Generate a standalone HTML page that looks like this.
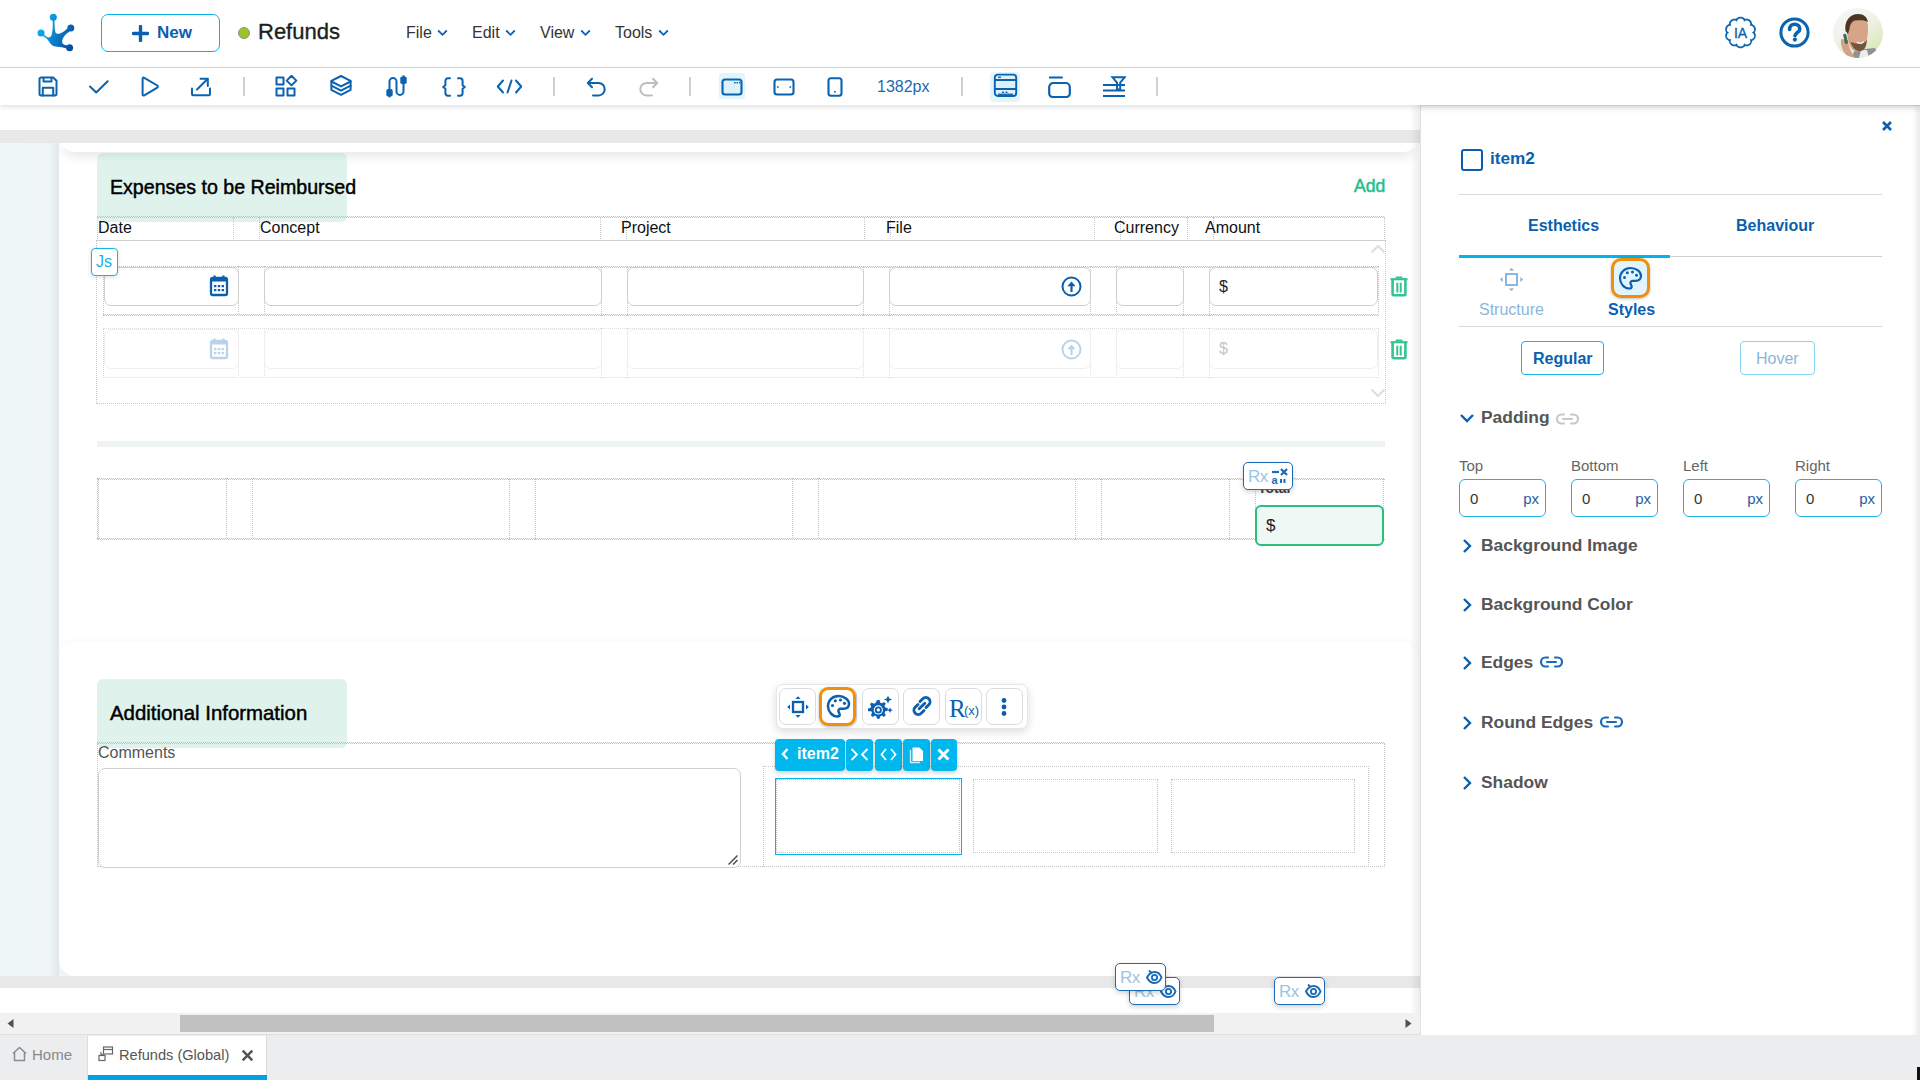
<!DOCTYPE html>
<html><head><meta charset="utf-8">
<style>
*{box-sizing:border-box;margin:0;padding:0}
html,body{width:1920px;height:1080px;overflow:hidden;background:#fff;font-family:"Liberation Sans",sans-serif;color:#222}
.a{position:absolute}
svg{display:block}
.ib{fill:none;stroke:#0a63b0;stroke-width:2;stroke-linecap:round;stroke-linejoin:round}
.dot{border:1px dotted #c4c4c4}
.zh{position:absolute;height:2px;background-image:repeating-linear-gradient(90deg,#c2c2c2 0 1px,transparent 1px 2px),repeating-linear-gradient(90deg,transparent 0 1px,#c2c2c2 1px 2px);background-size:100% 1px,100% 1px;background-position:0 0,0 1px;background-repeat:no-repeat}
.zv{position:absolute;width:2px;background-image:repeating-linear-gradient(0deg,#c2c2c2 0 1px,transparent 1px 2px),repeating-linear-gradient(0deg,transparent 0 1px,#c2c2c2 1px 2px);background-size:1px 100%,1px 100%;background-position:0 0,1px 0;background-repeat:no-repeat}
.inp{position:absolute;border:1.5px solid #cfcfcf;border-radius:7px;background:#fff}
.inp2{position:absolute;border:1px solid #efefef;border-radius:7px;background:#fff}
.lbl{position:absolute;font-size:16px;color:#111;line-height:16px}
.sec{position:absolute;left:1481px;font-size:17.4px;font-weight:bold;color:#555;line-height:17px}
.chev{position:absolute;left:1462px}
.pin{position:absolute;top:479px;width:87px;height:38px;border:1.5px solid #1ab3e8;border-radius:6px}
.pin .z{position:absolute;left:10px;top:10px;font-size:15px;color:#333}
.pin .px{position:absolute;right:6px;top:10px;font-size:15px;color:#1a5fa8}
.plab{position:absolute;top:458px;font-size:15px;color:#666}
.rx{position:absolute;width:51px;height:28px;border:1.5px solid #1a6bb8;border-radius:5px;background:#fff;box-shadow:0 2px 5px rgba(0,0,0,.18)}
.rx span{position:absolute;left:4px;top:4px;font-size:17px;color:#9cc4e4;letter-spacing:-.5px}
.tb{position:absolute;top:688px;width:37px;height:37px;border:1px solid #dcdcdc;border-radius:7px;background:#fff}
.bt{position:absolute;top:739px;height:32px;background:#00b7ee;border-radius:4px;box-shadow:0 2px 4px rgba(0,0,0,.2)}
</style></head>
<body>

<!-- HEADER -->
<div class="a" style="left:0;top:0;width:1920px;height:67px;background:#fff"></div>
<div class="a" style="left:0;top:67px;width:1920px;height:1px;background:#d6d6d6"></div>
<!-- logo -->
<svg class="a" style="left:30px;top:8px" width="52" height="50" viewBox="0 0 52 50">
  <defs><linearGradient id="lg" gradientUnits="userSpaceOnUse" x1="8" y1="20" x2="42" y2="34"><stop offset="0" stop-color="#10b0ee"/><stop offset=".45" stop-color="#0a86d2"/><stop offset="1" stop-color="#0a4ea2"/></linearGradient></defs>
  <g fill="url(#lg)">
    <path d="M22.4 10 C23.2 16 22.8 24 21.4 27.6 C20.6 29.6 18.2 30.2 16.4 28.6 C14.8 27.2 13 26.2 11.5 24.2 L10.5 26.8 C14 28.4 17 30.4 19 33.6 C20.6 36.4 22.4 38.6 27.4 38.8 C31 38.9 35 39.6 38.6 41.6 L40.4 38.2 C37 37.4 33.4 37.2 32.4 35 C31.6 32.8 33 28 38.2 24.6 L41.8 21.6 L39.6 18.4 C36 21.6 33.5 24.2 30.4 25.2 C28.2 26 26.4 26 25.4 24.2 C24.4 20.4 24.4 14 24.6 10 Z"/>
    <circle cx="23.3" cy="9.3" r="3.5"/>
    <circle cx="40.8" cy="20" r="3.5"/>
    <circle cx="11" cy="25" r="3.5"/>
    <circle cx="39.6" cy="39.7" r="3.5"/>
  </g>
</svg>
<!-- New button -->
<div class="a" style="left:101px;top:14px;width:119px;height:38px;border:1.6px solid #0ab2ea;border-radius:7px"></div>
<svg class="a" style="left:132px;top:25px" width="17" height="17" viewBox="0 0 17 17"><path d="M8.5 1.5v14M1.5 8.5h14" stroke="#0a5fb0" stroke-width="3.4" stroke-linecap="round"/></svg>
<div class="a" style="left:157px;top:24px;font-size:17px;line-height:17px;font-weight:bold;color:#0a5fb0">New</div>
<!-- status + title -->
<div class="a" style="left:238px;top:27px;width:12px;height:12px;border-radius:50%;background:#9cc22e;border:1px solid #8a9a70"></div>
<div class="a" style="left:258px;top:21px;font-size:22px;line-height:22px;color:#1e1e1e;-webkit-text-stroke:.35px #1e1e1e">Refunds</div>
<!-- menus -->
<div class="a" style="left:406px;top:25px;font-size:16px;line-height:16px;color:#333">File</div>
<svg class="a" style="left:437px;top:29px" width="11" height="8" viewBox="0 0 11 8"><path d="M1.2 1.5L5.5 5.8L9.8 1.5" fill="none" stroke="#0a63b0" stroke-width="1.8"/></svg>
<div class="a" style="left:472px;top:25px;font-size:16px;line-height:16px;color:#333">Edit</div>
<svg class="a" style="left:505px;top:29px" width="11" height="8" viewBox="0 0 11 8"><path d="M1.2 1.5L5.5 5.8L9.8 1.5" fill="none" stroke="#0a63b0" stroke-width="1.8"/></svg>
<div class="a" style="left:540px;top:25px;font-size:16px;line-height:16px;color:#333">View</div>
<svg class="a" style="left:580px;top:29px" width="11" height="8" viewBox="0 0 11 8"><path d="M1.2 1.5L5.5 5.8L9.8 1.5" fill="none" stroke="#0a63b0" stroke-width="1.8"/></svg>
<div class="a" style="left:615px;top:25px;font-size:16px;line-height:16px;color:#333">Tools</div>
<svg class="a" style="left:658px;top:29px" width="11" height="8" viewBox="0 0 11 8"><path d="M1.2 1.5L5.5 5.8L9.8 1.5" fill="none" stroke="#0a63b0" stroke-width="1.8"/></svg>
<!-- right icons -->
<svg class="a" style="left:1723px;top:15px" width="35" height="35" viewBox="0 0 35 35">
  <path d="M17.50 2.60 L17.81 2.61 L18.12 2.64 L18.43 2.69 L18.74 2.77 L19.04 2.86 L19.33 2.98 L19.62 3.11 L19.91 3.27 L20.18 3.44 L20.45 3.64 L20.70 3.86 L20.94 4.10 L21.17 4.37 L21.37 4.68 L21.52 5.14 L21.90 4.85 L22.25 4.72 L22.59 4.64 L22.93 4.58 L23.26 4.56 L23.59 4.55 L23.92 4.57 L24.24 4.61 L24.55 4.67 L24.86 4.75 L25.16 4.85 L25.45 4.97 L25.73 5.11 L26.00 5.27 L26.26 5.45 L26.50 5.64 L26.74 5.85 L26.96 6.07 L27.16 6.31 L27.35 6.56 L27.52 6.83 L27.68 7.11 L27.81 7.40 L27.93 7.70 L28.03 8.02 L28.11 8.34 L28.16 8.68 L28.18 9.03 L28.17 9.40 L28.02 9.86 L28.50 9.86 L28.86 9.96 L29.18 10.09 L29.49 10.24 L29.77 10.42 L30.04 10.61 L30.29 10.81 L30.53 11.03 L30.74 11.27 L30.95 11.51 L31.13 11.77 L31.29 12.04 L31.44 12.32 L31.56 12.60 L31.67 12.90 L31.76 13.20 L31.82 13.50 L31.87 13.81 L31.89 14.12 L31.90 14.44 L31.88 14.76 L31.84 15.07 L31.78 15.39 L31.70 15.71 L31.59 16.02 L31.46 16.33 L31.31 16.63 L31.12 16.93 L30.89 17.22 L30.50 17.50 L30.89 17.78 L31.12 18.07 L31.31 18.37 L31.46 18.67 L31.59 18.98 L31.70 19.29 L31.78 19.61 L31.84 19.93 L31.88 20.24 L31.90 20.56 L31.89 20.88 L31.87 21.19 L31.82 21.50 L31.76 21.80 L31.67 22.10 L31.56 22.40 L31.44 22.68 L31.29 22.96 L31.13 23.23 L30.95 23.49 L30.74 23.73 L30.53 23.97 L30.29 24.19 L30.04 24.39 L29.77 24.58 L29.49 24.76 L29.18 24.91 L28.86 25.04 L28.50 25.14 L28.02 25.14 L28.17 25.60 L28.18 25.97 L28.16 26.32 L28.11 26.66 L28.03 26.98 L27.93 27.30 L27.81 27.60 L27.68 27.89 L27.52 28.17 L27.35 28.44 L27.16 28.69 L26.96 28.93 L26.74 29.15 L26.50 29.36 L26.26 29.55 L26.00 29.73 L25.73 29.89 L25.45 30.03 L25.16 30.15 L24.86 30.25 L24.55 30.33 L24.24 30.39 L23.92 30.43 L23.59 30.45 L23.26 30.44 L22.93 30.42 L22.59 30.36 L22.25 30.28 L21.90 30.15 L21.52 29.86 L21.37 30.32 L21.17 30.63 L20.94 30.90 L20.70 31.14 L20.45 31.36 L20.18 31.56 L19.91 31.73 L19.62 31.89 L19.33 32.02 L19.04 32.14 L18.74 32.23 L18.43 32.31 L18.12 32.36 L17.81 32.39 L17.50 32.40 L17.19 32.39 L16.88 32.36 L16.57 32.31 L16.26 32.23 L15.96 32.14 L15.67 32.02 L15.38 31.89 L15.09 31.73 L14.82 31.56 L14.55 31.36 L14.30 31.14 L14.06 30.90 L13.83 30.63 L13.63 30.32 L13.48 29.86 L13.10 30.15 L12.75 30.28 L12.41 30.36 L12.07 30.42 L11.74 30.44 L11.41 30.45 L11.08 30.43 L10.76 30.39 L10.45 30.33 L10.14 30.25 L9.84 30.15 L9.55 30.03 L9.27 29.89 L9.00 29.73 L8.74 29.55 L8.50 29.36 L8.26 29.15 L8.04 28.93 L7.84 28.69 L7.65 28.44 L7.48 28.17 L7.32 27.89 L7.19 27.60 L7.07 27.30 L6.97 26.98 L6.89 26.66 L6.84 26.32 L6.82 25.97 L6.83 25.60 L6.98 25.14 L6.50 25.14 L6.14 25.04 L5.82 24.91 L5.51 24.76 L5.23 24.58 L4.96 24.39 L4.71 24.19 L4.47 23.97 L4.26 23.73 L4.05 23.49 L3.87 23.23 L3.71 22.96 L3.56 22.68 L3.44 22.40 L3.33 22.10 L3.24 21.80 L3.18 21.50 L3.13 21.19 L3.11 20.88 L3.10 20.56 L3.12 20.24 L3.16 19.93 L3.22 19.61 L3.30 19.29 L3.41 18.98 L3.54 18.67 L3.69 18.37 L3.88 18.07 L4.11 17.78 L4.50 17.50 L4.11 17.22 L3.88 16.93 L3.69 16.63 L3.54 16.33 L3.41 16.02 L3.30 15.71 L3.22 15.39 L3.16 15.07 L3.12 14.76 L3.10 14.44 L3.11 14.12 L3.13 13.81 L3.18 13.50 L3.24 13.20 L3.33 12.90 L3.44 12.60 L3.56 12.32 L3.71 12.04 L3.87 11.77 L4.05 11.51 L4.26 11.27 L4.47 11.03 L4.71 10.81 L4.96 10.61 L5.23 10.42 L5.51 10.24 L5.82 10.09 L6.14 9.96 L6.50 9.86 L6.98 9.86 L6.83 9.40 L6.82 9.03 L6.84 8.68 L6.89 8.34 L6.97 8.02 L7.07 7.70 L7.19 7.40 L7.32 7.11 L7.48 6.83 L7.65 6.56 L7.84 6.31 L8.04 6.07 L8.26 5.85 L8.50 5.64 L8.74 5.45 L9.00 5.27 L9.27 5.11 L9.55 4.97 L9.84 4.85 L10.14 4.75 L10.45 4.67 L10.76 4.61 L11.08 4.57 L11.41 4.55 L11.74 4.56 L12.07 4.58 L12.41 4.64 L12.75 4.72 L13.10 4.85 L13.48 5.14 L13.63 4.68 L13.83 4.37 L14.06 4.10 L14.30 3.86 L14.55 3.64 L14.82 3.44 L15.09 3.27 L15.38 3.11 L15.67 2.98 L15.96 2.86 L16.26 2.77 L16.57 2.69 L16.88 2.64 L17.19 2.61 L17.50 2.60Z" fill="none" stroke="#0a63b0" stroke-width="1.8"/>
  <text x="17.6" y="22.6" text-anchor="middle" font-family="Liberation Sans" font-size="14" fill="#0a63b0" stroke="#0a63b0" stroke-width=".35">IA</text>
</svg>
<svg class="a" style="left:1779px;top:17px" width="31" height="31" viewBox="0 0 31 31">
  <circle cx="15.5" cy="15.5" r="13.6" fill="none" stroke="#0a63b0" stroke-width="3"/>
  <path d="M10.6 12.4 C10.6 9 12.8 7.2 15.6 7.2 C18.6 7.2 20.8 9.1 20.8 11.9 C20.8 15.2 16.6 15.4 16 18.6" fill="none" stroke="#0a63b0" stroke-width="3.6" stroke-linecap="round"/>
  <circle cx="15.9" cy="22.6" r="2.1" fill="#0a63b0"/>
</svg>
<svg class="a" style="left:1833px;top:8px" width="50" height="50" viewBox="0 0 50 50">
  <defs><clipPath id="av"><circle cx="25" cy="25" r="25"/></clipPath>
  <linearGradient id="avbg" x1="0" y1="0" x2="0.6" y2="1"><stop offset="0" stop-color="#f8f8f6"/><stop offset=".5" stop-color="#f0f2ea"/><stop offset="1" stop-color="#d8e8b8"/></linearGradient>
  <filter id="bl"><feGaussianBlur stdDeviation=".6"/></filter></defs>
  <g clip-path="url(#av)">
    <rect width="50" height="50" fill="url(#avbg)"/>
    <g filter="url(#bl)">
    <path d="M22 42 L18 50 L46 50 L42 40 Z" fill="#8e9096"/>
    <path d="M28 42 L26 50 L36 50 L34 42Z" fill="#ecebea"/>
    <path d="M14 20 C14 11 20 8 26 8 C32 8 35 13 35 20 C35 30 33 38 28 42 C24 45 19 43 17 38 C15 34 14 27 14 20Z" fill="#d6a487"/>
    <path d="M12.5 23 C11 13 17 6 25 6 C31 6 34 9 35 14 C32 12 28 12 22 12.5 C19 13.5 17 16 16.5 21 L15 26 Z" fill="#4e3626"/>
    <path d="M17.5 34 C19.5 40 23 43.5 28 43 C32 42 33.5 38 34 32 C31 35.5 27 36.5 23 35.5 C20.5 35 18.5 34 17.5 34Z" fill="#76543e"/>
    <path d="M24 34 C26 35.5 29 35.5 31 33.5" stroke="#f4f0ea" stroke-width="1.3" fill="none"/>
    <path d="M8 31 C7 38 11 46 16 50 L22 50 C18 44 15 37 15 32 Z" fill="#d3a286"/>
    <rect x="11" y="26" width="3.2" height="10" rx="1" fill="#3f6b5c" transform="rotate(-12 12 31)"/>
    </g>
  </g>
</svg>

<!-- TOOLBAR shadow -->
<div class="a" style="left:0;top:68px;width:1920px;height:37px;background:#fff;box-shadow:0 2px 5px rgba(0,0,0,.12);z-index:2">
<!-- save -->
<svg class="a" style="left:37px;top:8px" width="22" height="22" viewBox="0 0 22 22"><g class="ib"><path d="M2.5 3.2a1.7 1.7 0 0 1 1.7-1.7h12l3.3 3.3v13a1.7 1.7 0 0 1-1.7 1.7H4.2a1.7 1.7 0 0 1-1.7-1.7z"/><path d="M6.5 1.8v3.8h8V1.8"/><path d="M5.8 19.6v-7.8h10.4v7.8"/></g></svg>
<!-- check -->
<svg class="a" style="left:88px;top:11px" width="22" height="16" viewBox="0 0 22 16"><path d="M2 7.5l6.2 6 11.5-11.2" class="ib" stroke-width="2.1" stroke-linecap="butt"/></svg>
<!-- play -->
<svg class="a" style="left:140px;top:8px" width="20" height="22" viewBox="0 0 20 22"><path d="M2.6 2.8c0-1 .9-1.5 1.7-1l13 7.7c.8.5.8 1.6 0 2.1l-13 7.8c-.8.5-1.7 0-1.7-1z" class="ib" stroke-width="2.1"/></svg>
<!-- export -->
<svg class="a" style="left:190px;top:9px" width="22" height="20" viewBox="0 0 22 20"><g class="ib" stroke-width="2.1"><path d="M2 11.5v5.8c0 .6.4 1 1 1h16c.6 0 1-.4 1-1v-5.8"/><path d="M7 12.5L17.5 2"/><path d="M10.5 1.8h7.3v7.3"/></g></svg>
<div class="a" style="left:243px;top:9px;width:2px;height:19px;background:#d0d0d0"></div>
<!-- widgets -->
<svg class="a" style="left:275px;top:7px" width="23" height="23" viewBox="0 0 23 23"><g class="ib" stroke-width="2.2" stroke-linejoin="miter" stroke-linecap="butt"><rect x="1.5" y="2.5" width="7" height="7"/><rect x="1.5" y="13.5" width="7" height="7"/><rect x="12.5" y="13.5" width="7" height="7"/><path d="M16.5 0.8l4.8 4.8-4.8 4.8-4.8-4.8z"/></g></svg>
<!-- layers -->
<svg class="a" style="left:329px;top:6px" width="24" height="24" viewBox="0 0 24 24"><g class="ib" stroke-width="2.2"><path d="M12 2l9.6 4.9v0.6L12 12.4 2.4 7.5v-0.6z"/><path d="M2.4 7.5v4.2L12 16.6l9.6-4.9V7.5"/><path d="M2.4 11.7v4.2L12 20.8l9.6-4.9v-4.2"/></g></svg>
<!-- connector -->
<svg class="a" style="left:385px;top:7px" width="23" height="23" viewBox="0 0 23 23"><g fill="#0a63b0"><rect x="1.3" y="14" width="6.4" height="7.6" rx="1.8"/><rect x="15.3" y="1.4" width="6.4" height="7.6" rx="1.8"/><rect x="3.5" y="20" width="2" height="2.4"/><rect x="17.5" y="0.3" width="2" height="2.4"/></g><path d="M4.5 15V6.6a3.5 3.5 0 0 1 7 0v9.8a3.5 3.5 0 0 0 7 0V8" class="ib" stroke-width="2.1"/></svg>
<!-- braces -->
<svg class="a" style="left:441px;top:8px" width="26" height="22" viewBox="0 0 26 22"><g class="ib" stroke-width="2.6" stroke-linecap="butt"><path d="M9 2.3H7A2.6 2.6 0 0 0 4.4 4.9v4.3L2.2 11l2.2 1.8v4.3A2.6 2.6 0 0 0 7 19.7h2"/><path d="M17 2.3h2a2.6 2.6 0 0 1 2.6 2.6v4.3l2.2 1.8-2.2 1.8v4.3a2.6 2.6 0 0 1-2.6 2.6h-2"/></g></svg>
<!-- code -->
<svg class="a" style="left:496px;top:11px" width="27" height="15" viewBox="0 0 27 15"><g class="ib" stroke-width="2.2"><path d="M7 1.5L1.8 7.5 7 13.5"/><path d="M20 1.5l5.2 6-5.2 6"/><path d="M15.5 1.5l-4 12"/></g></svg>
<div class="a" style="left:553px;top:9px;width:2px;height:19px;background:#d0d0d0"></div>
<!-- undo -->
<svg class="a" style="left:586px;top:9px" width="22" height="20" viewBox="0 0 22 20"><g class="ib" stroke-width="2.1"><path d="M6 1.8L1.8 6 6 10.2"/><path d="M2.2 6h10.3a6.2 6.2 0 0 1 0 12.4H7"/></g></svg>
<!-- redo -->
<svg class="a" style="left:637px;top:9px" width="22" height="20" viewBox="0 0 22 20"><g class="ib" style="stroke:#bdbdbd" stroke-width="2.1"><path d="M16 1.8L20.2 6 16 10.2"/><path d="M19.8 6H9.5a6.2 6.2 0 0 0 0 12.4H15"/></g></svg>
<div class="a" style="left:689px;top:9px;width:2px;height:19px;background:#d0d0d0"></div>
<!-- desktop active -->
<div class="a" style="left:719px;top:5px;width:26px;height:26px;background:#e2f4fc;border-radius:3px"></div>
<svg class="a" style="left:721px;top:10px" width="22" height="18" viewBox="0 0 22 18"><rect x="1.5" y="1.5" width="19" height="15" rx="2.5" fill="#ddf1fa" stroke="#0a63b0" stroke-width="2.1"/><g fill="#0a63b0"><rect x="13" y="4" width="1.6" height="1.4"/><rect x="15.5" y="4" width="1.6" height="1.4"/><rect x="18" y="4" width="1.3" height="1.4"/></g></svg>
<!-- tablet -->
<svg class="a" style="left:773px;top:10px" width="22" height="18" viewBox="0 0 22 18"><rect x="1.5" y="1.5" width="19" height="15" rx="2.5" fill="none" stroke="#0a63b0" stroke-width="2.1"/><g fill="#0a63b0"><rect x="4" y="8.2" width="1.6" height="1.6"/><rect x="16.5" y="8.2" width="1.6" height="1.6"/></g></svg>
<!-- mobile -->
<svg class="a" style="left:827px;top:9px" width="16" height="20" viewBox="0 0 16 20"><rect x="1.5" y="1.3" width="13" height="17.5" rx="2.5" fill="none" stroke="#0a63b0" stroke-width="2.1"/><rect x="7.2" y="14" width="1.6" height="1.6" fill="#0a63b0"/></svg>
<div class="a" style="left:877px;top:11px;font-size:16px;line-height:16px;color:#1a6ab2">1382px</div>
<div class="a" style="left:961px;top:9px;width:2px;height:19px;background:#d0d0d0"></div>
<!-- layout active -->
<div class="a" style="left:990px;top:4px;width:30px;height:30px;background:#e2f4fc;border-radius:4px"></div>
<svg class="a" style="left:993px;top:5px" width="25" height="25" viewBox="0 0 25 25"><rect x="1.8" y="1.6" width="21.4" height="21.4" rx="3" fill="#ddf1fa" stroke="#0a63b0" stroke-width="1.9"/><path d="M2 7h21M2 16h21" stroke="#0a63b0" stroke-width="1.9"/><rect x="5" y="3.6" width="3" height="1.3" fill="#0a63b0"/><rect x="9" y="18.6" width="2" height="1.4" fill="#0a63b0"/><rect x="12.5" y="18.6" width="2" height="1.4" fill="#0a63b0"/><rect x="5" y="20.6" width="15" height="1.3" fill="#0a63b0"/></svg>
<!-- card -->
<svg class="a" style="left:1047px;top:7px" width="25" height="23" viewBox="0 0 25 23"><path d="M2.2 12a4 4 0 0 1 4-4h12.6a4 4 0 0 1 4 4v6.5a3.5 3.5 0 0 1-3.5 3.5H5.7a3.5 3.5 0 0 1-3.5-3.5z" fill="none" stroke="#0a63b0" stroke-width="2.2"/><rect x="2" y="1.5" width="13.8" height="2" fill="#0a63b0"/></svg>
<!-- filter lines -->
<svg class="a" style="left:1102px;top:8px" width="24" height="21" viewBox="0 0 24 21"><g fill="#0a63b0"><rect x="1" y="8" width="22" height="2"/><rect x="1" y="13.5" width="22" height="2"/><rect x="1" y="19" width="22" height="2"/></g><path d="M10.5 1.3h12.2l-4.5 5.3v6.8h-3.2V6.6z" fill="none" stroke="#0a63b0" stroke-width="2"/></svg>
<div class="a" style="left:1156px;top:9px;width:2px;height:19px;background:#d0d0d0"></div>
</div>

<!-- CANVAS -->
<div class="a" style="left:0;top:105px;width:1420px;height:930px;background:#fff"></div>
<div class="a" style="left:55px;top:950px;width:25px;height:26px;background:#eef5f4"></div>
<div class="a" style="left:59px;top:132px;width:1360px;height:20px;background:#fff;border-radius:0 0 16px 16px;box-shadow:0 8px 12px -4px rgba(0,0,0,.11)"></div>
<div class="a" style="left:59px;top:642px;width:1360px;height:334px;background:#fff;border-radius:16px 16px 16px 16px;box-shadow:0 -2px 6px rgba(0,0,0,.025)"></div>
<div class="a" style="left:0;top:130px;width:1420px;height:13px;background:#e8e8e8"></div>
<div class="a" style="left:0;top:143px;width:59px;height:833px;background:linear-gradient(90deg,#eff6f6 0,#eef5f4 50px,#e8eded 55px,#e1e6e6 59px)"></div>
<div class="a" style="left:0;top:976px;width:1420px;height:12px;background:#e8e8e8"></div>
<div class="a" style="left:1410px;top:105px;width:10px;height:930px;background:linear-gradient(90deg,rgba(0,0,0,0),rgba(0,0,0,.075))"></div>
<!-- scrollbar -->
<div class="a" style="left:0;top:1013px;width:1420px;height:22px;background:#f1f1f1"></div>
<div class="a" style="left:180px;top:1015px;width:1034px;height:17px;background:#c1c1c1"></div>
<svg class="a" style="left:6px;top:1018px" width="9" height="11" viewBox="0 0 9 11"><path d="M1.5 5.5L7.5 1v9z" fill="#505050"/></svg>
<svg class="a" style="left:1404px;top:1018px" width="9" height="11" viewBox="0 0 9 11"><path d="M7.5 5.5L1.5 1v9z" fill="#505050"/></svg>

<!-- EXPENSES SECTION -->
<div class="a" style="left:97px;top:153px;width:250px;height:69px;background:linear-gradient(180deg,#cfe6dd 0,#dff3ec 8px,#dff3ec 100%);border-radius:6px"></div>
<div class="a" style="left:110px;top:177px;font-size:19.6px;line-height:20px;color:#000;-webkit-text-stroke:.45px #000">Expenses to be Reimbursed</div>
<div class="a" style="left:1354px;top:178px;font-size:17.6px;line-height:17px;color:#22bf8a;-webkit-text-stroke:.5px #22bf8a">Add</div>

<!-- header row -->
<div class="a dot" style="left:97px;top:217px;width:1288px;height:24px;border-top:none"></div><div class="zh" style="left:97px;top:216px;width:1288px"></div>
<div class="a dot" style="left:233px;top:217px;width:27px;height:24px;border-top:none;border-bottom:none"></div>
<div class="a dot" style="left:600px;top:217px;width:27px;height:24px;border-top:none;border-bottom:none"></div>
<div class="a dot" style="left:864px;top:217px;width:27px;height:24px;border-top:none;border-bottom:none"></div>
<div class="a dot" style="left:1094px;top:217px;width:27px;height:24px;border-top:none;border-bottom:none"></div>
<div class="a dot" style="left:1187px;top:217px;width:27px;height:24px;border-top:none;border-bottom:none"></div>
<div class="lbl" style="left:98px;top:220px">Date</div>
<div class="lbl" style="left:260px;top:220px">Concept</div>
<div class="lbl" style="left:621px;top:220px">Project</div>
<div class="lbl" style="left:886px;top:220px">File</div>
<div class="lbl" style="left:1114px;top:220px">Currency</div>
<div class="lbl" style="left:1205px;top:220px">Amount</div>

<!-- body container -->
<div class="a dot" style="left:96px;top:240px;width:1290px;height:164px;border-top:1.5px solid #cfcfcf"></div>
<svg class="a" style="left:1370px;top:244px" width="16" height="10" viewBox="0 0 16 10"><path d="M1.5 8.5L8 2l6.5 6.5" fill="none" stroke="#dedede" stroke-width="2"/></svg>
<svg class="a" style="left:1370px;top:388px" width="16" height="10" viewBox="0 0 16 10"><path d="M1.5 1.5L8 8l6.5-6.5" fill="none" stroke="#dedede" stroke-width="2"/></svg>

<!-- row 1 -->
<div class="a dot" style="left:103px;top:266px;width:1276px;height:50px;border-top:none;border-bottom:none"></div><div class="zh" style="left:103px;top:266px;width:1276px"></div><div class="zh" style="left:103px;top:314px;width:1276px"></div>
<div class="a dot" style="left:238px;top:266px;width:27px;height:50px;border-top:none;border-bottom:none"></div>
<div class="a dot" style="left:601px;top:266px;width:27px;height:50px;border-top:none;border-bottom:none"></div>
<div class="a dot" style="left:863px;top:266px;width:27px;height:50px;border-top:none;border-bottom:none"></div>
<div class="a dot" style="left:1090px;top:266px;width:27px;height:50px;border-top:none;border-bottom:none"></div>
<div class="a dot" style="left:1183px;top:266px;width:27px;height:50px;border-top:none;border-bottom:none"></div>
<div class="inp" style="left:104px;top:267px;width:135px;height:39px"></div>
<div class="inp" style="left:264px;top:267px;width:338px;height:39px"></div>
<div class="inp" style="left:627px;top:267px;width:237px;height:39px"></div>
<div class="inp" style="left:889px;top:267px;width:202px;height:39px"></div>
<div class="inp" style="left:1116px;top:267px;width:68px;height:39px"></div>
<div class="inp" style="left:1209px;top:267px;width:169px;height:39px"></div>
<svg class="a" style="left:209px;top:275px" width="20" height="22" viewBox="0 0 20 22"><g fill="#0a5fb0"><rect x="4.5" y="0.5" width="2.2" height="4"/><rect x="13.3" y="0.5" width="2.2" height="4"/></g><rect x="2" y="3" width="16" height="17" rx="1.8" fill="none" stroke="#0a5fb0" stroke-width="2.3"/><rect x="2" y="3" width="16" height="3.5" fill="#0a5fb0"/><g fill="#0a5fb0"><rect x="5" y="10" width="2.4" height="2.2"/><rect x="8.8" y="10" width="2.4" height="2.2"/><rect x="12.6" y="10" width="2.4" height="2.2"/><rect x="5" y="14" width="2.4" height="2.2"/><rect x="8.8" y="14" width="2.4" height="2.2"/><rect x="12.6" y="14" width="2.4" height="2.2"/></g></svg>
<svg class="a" style="left:1061px;top:276px" width="21" height="21" viewBox="0 0 21 21"><circle cx="10.5" cy="10.5" r="9" fill="none" stroke="#0a5fb0" stroke-width="2"/><path d="M10.5 16V7.5" stroke="#0a5fb0" stroke-width="2.2"/><path d="M6.3 10.2L10.5 5.6l4.2 4.6z" fill="#0a5fb0"/></svg>
<div class="a" style="left:1219px;top:279px;font-size:16px;line-height:16px;color:#222">$</div>
<svg class="a" style="left:1389px;top:276px" width="20" height="21" viewBox="0 0 20 21"><g fill="none" stroke="#34c490"><path d="M1.5 3.2h17" stroke-width="2.2"/><path d="M3.6 4v14.2c0 .6.4 1 1 1h10.8c.6 0 1-.4 1-1V4" stroke-width="2.6"/><path d="M8.3 6.8v9.6M11.7 6.8v9.6" stroke-width="2"/><path d="M7.5 2.6V1.3h5v1.3" stroke-width="1.6"/></g></svg>

<!-- row 2 (faded) -->
<div class="a dot" style="left:103px;top:328px;width:1276px;height:50px;border-color:#dcdcdc"></div>
<div class="a dot" style="left:238px;top:328px;width:27px;height:50px;border-color:#e2e2e2;border-top:none;border-bottom:none"></div>
<div class="a dot" style="left:601px;top:328px;width:27px;height:50px;border-color:#e2e2e2;border-top:none;border-bottom:none"></div>
<div class="a dot" style="left:863px;top:328px;width:27px;height:50px;border-color:#e2e2e2;border-top:none;border-bottom:none"></div>
<div class="a dot" style="left:1090px;top:328px;width:27px;height:50px;border-color:#e2e2e2;border-top:none;border-bottom:none"></div>
<div class="a dot" style="left:1183px;top:328px;width:27px;height:50px;border-color:#e2e2e2;border-top:none;border-bottom:none"></div>
<div class="inp2" style="left:104px;top:329px;width:135px;height:40px"></div>
<div class="inp2" style="left:264px;top:329px;width:338px;height:40px"></div>
<div class="inp2" style="left:627px;top:329px;width:237px;height:40px"></div>
<div class="inp2" style="left:889px;top:329px;width:202px;height:40px"></div>
<div class="inp2" style="left:1116px;top:329px;width:68px;height:40px"></div>
<div class="inp2" style="left:1209px;top:329px;width:169px;height:40px"></div>
<svg class="a" style="left:209px;top:338px" width="20" height="22" viewBox="0 0 20 22"><g fill="#b9d4ea"><rect x="4.5" y="0.5" width="2.2" height="4"/><rect x="13.3" y="0.5" width="2.2" height="4"/></g><rect x="2" y="3" width="16" height="17" rx="1.8" fill="none" stroke="#b9d4ea" stroke-width="2.3"/><rect x="2" y="3" width="16" height="3.5" fill="#b9d4ea"/><g fill="#b9d4ea"><rect x="5" y="10" width="2.4" height="2.2"/><rect x="8.8" y="10" width="2.4" height="2.2"/><rect x="12.6" y="10" width="2.4" height="2.2"/><rect x="5" y="14" width="2.4" height="2.2"/><rect x="8.8" y="14" width="2.4" height="2.2"/><rect x="12.6" y="14" width="2.4" height="2.2"/></g></svg>
<svg class="a" style="left:1061px;top:339px" width="21" height="21" viewBox="0 0 21 21"><circle cx="10.5" cy="10.5" r="9" fill="none" stroke="#b9d4ea" stroke-width="2"/><path d="M10.5 16V7.5" stroke="#b9d4ea" stroke-width="2.2"/><path d="M6.3 10.2L10.5 5.6l4.2 4.6z" fill="#b9d4ea"/></svg>
<div class="a" style="left:1219px;top:341px;font-size:16px;line-height:16px;color:#c4c4c4">$</div>
<svg class="a" style="left:1389px;top:339px" width="20" height="21" viewBox="0 0 20 21"><g fill="none" stroke="#34c490"><path d="M1.5 3.2h17" stroke-width="2.2"/><path d="M3.6 4v14.2c0 .6.4 1 1 1h10.8c.6 0 1-.4 1-1V4" stroke-width="2.6"/><path d="M8.3 6.8v9.6M11.7 6.8v9.6" stroke-width="2"/><path d="M7.5 2.6V1.3h5v1.3" stroke-width="1.6"/></g></svg>

<!-- Js badge -->
<div class="a" style="left:91px;top:248px;width:27px;height:28px;border:1.8px solid #1ab3e8;border-radius:4px;background:#fff;box-shadow:0 1px 4px rgba(0,0,0,.15)"><span class="a" style="left:4px;top:5px;font-size:16px;line-height:16px;color:#1ab3e8">Js</span></div>

<!-- separator -->
<div class="a" style="left:97px;top:441px;width:1288px;height:6px;background:#f0f3f3"></div>

<!-- total row -->
<div class="zh" style="left:97px;top:478px;width:1288px"></div><div class="zh" style="left:97px;top:538px;width:1288px"></div><div class="zv" style="left:97px;top:478px;height:62px"></div><div class="a" style="left:1383px;top:478px;width:1px;height:62px;border-left:1px dotted #c4c4c4"></div>
<div class="a dot" style="left:226px;top:478px;width:27px;height:62px;border-top:none;border-bottom:none"></div>
<div class="a dot" style="left:509px;top:478px;width:27px;height:62px;border-top:none;border-bottom:none"></div>
<div class="a dot" style="left:792px;top:478px;width:27px;height:62px;border-top:none;border-bottom:none"></div>
<div class="a dot" style="left:1075px;top:478px;width:27px;height:62px;border-top:none;border-bottom:none"></div>
<div class="a dot" style="left:1229px;top:478px;width:27px;height:62px;border-top:none;border-bottom:none"></div>
<div class="a" style="left:1258px;top:481px;font-size:14px;line-height:14px;font-weight:bold;color:#444">Total</div>
<div class="a" style="left:1255px;top:505px;width:129px;height:41px;border:2.2px solid #2ebd7e;border-radius:6px;background:#eef8f4"></div>
<div class="a" style="left:1266px;top:517px;font-size:17px;line-height:17px;color:#222">$</div>
<div class="rx" style="left:1243px;top:462px;width:50px;height:28px"><span>Rx</span>
<svg class="a" style="left:25px;top:4px" width="20" height="18" viewBox="0 0 20 18"><path d="M3 5h7" stroke="#1a6bb8" stroke-width="2.2"/><path d="M12 2l6 6M18 2l-6 6" stroke="#1a6bb8" stroke-width="2.2"/><text x="2.5" y="16.5" font-family="Liberation Sans" font-weight="bold" font-size="11" fill="#1a6bb8">a</text><rect x="11" y="12" width="2" height="4" fill="#1a6bb8"/><rect x="14.5" y="12" width="2" height="4" fill="#1a6bb8"/></svg></div>

<!-- ADDITIONAL INFO SECTION -->
<div class="a" style="left:97px;top:679px;width:250px;height:69px;background:#dff3ec;border-radius:6px"></div>
<div class="a" style="left:110px;top:703px;font-size:20.4px;line-height:20px;color:#000;-webkit-text-stroke:.45px #000">Additional Information</div>
<div class="a dot" style="left:97px;top:743px;width:1288px;height:124px;border-top:none"></div><div class="zh" style="left:97px;top:742px;width:1288px"></div>
<div class="a" style="left:98px;top:745px;font-size:16px;line-height:16px;color:#555">Comments</div>
<div class="a" style="left:98px;top:768px;width:643px;height:100px;border:1.5px solid #cfcfcf;border-radius:7px;background:#fff"></div>
<svg class="a" style="left:727px;top:854px" width="12" height="12" viewBox="0 0 12 12"><path d="M1.5 10.5l9-9M6 10.5l4.5-4.5" stroke="#444" stroke-width="1.4"/></svg>
<div class="a dot" style="left:763px;top:766px;width:606px;height:101px"></div>
<div class="a" style="left:775px;top:778px;width:187px;height:77px;border:1.6px solid #00b3ec"><div class="a dot" style="left:0;top:0;width:183.8px;height:73.8px"></div></div>
<div class="a dot" style="left:973px;top:779px;width:185px;height:74px"></div>
<div class="a dot" style="left:1171px;top:779px;width:184px;height:74px"></div>

<!-- floating toolbar -->
<div class="a" style="left:776px;top:684px;width:252px;height:45px;border:1px solid #e6e6e6;border-radius:7px;background:#fff;box-shadow:0 3px 8px rgba(0,0,0,.14)"></div>
<div class="tb" style="left:779px"></div>
<div class="tb" style="left:820px"></div>
<div class="tb" style="left:862px"></div>
<div class="tb" style="left:903px"></div>
<div class="tb" style="left:945px"></div>
<div class="tb" style="left:986px"></div>
<div class="a" style="left:819px;top:687px;width:37px;height:39px;border:3.5px solid #f0900a;border-radius:9px;box-shadow:0 1px 3px rgba(0,0,0,.3)"></div>
<!-- move icon -->
<svg class="a" style="left:786px;top:695px" width="24" height="24" viewBox="0 0 24 24"><rect x="7" y="7" width="10" height="10" fill="none" stroke="#0a5fb0" stroke-width="2.3"/><g fill="#0a5fb0"><path d="M12 1.2l2.6 2.8H9.4z"/><path d="M12 22.8l2.6-2.8H9.4z"/><path d="M1.2 12l2.8-2.6v5.2z"/><path d="M22.8 12l-2.8-2.6v5.2z"/></g></svg>
<!-- palette icon -->
<svg class="a" style="left:826px;top:694px" width="25" height="25" viewBox="0 0 25 25"><path d="M12.5 2C6.6 2 2 6.5 2 12.3c0 5.3 4.3 10.2 9.4 10.2 1.5 0 2.3-.8 2.3-2 0-1.5-1.3-1.8-1.3-3.4 0-1.3 1-2.3 2.3-2.3h2.8c3.7 0 5.5-2.3 5.5-5C23 5.8 18.5 2 12.5 2z" fill="none" stroke="#0a5fb0" stroke-width="2.5"/><g fill="#0a5fb0"><circle cx="6.5" cy="11.5" r="1.6"/><circle cx="9.3" cy="6.8" r="1.6"/><circle cx="14.5" cy="6" r="1.6"/><circle cx="18.5" cy="9.3" r="1.6"/></g></svg>
<!-- gear sparkle -->
<svg class="a" style="left:867px;top:695px" width="27" height="25" viewBox="0 0 27 25"><g transform="translate(1 4.5)"><path d="M9 0.5h2.6l.5 2.4 1.8.8 2.1-1.3 1.8 1.8-1.3 2.1.8 1.8 2.4.5v2.6l-2.4.5-.8 1.8 1.3 2.1-1.8 1.8-2.1-1.3-1.8.8-.5 2.4H9l-.5-2.4-1.8-.8-2.1 1.3-1.8-1.8 1.3-2.1-.8-1.8L0 11.7V9.1l2.4-.5.8-1.8-1.3-2.1 1.8-1.8 2.1 1.3 1.8-.8z" fill="#0a5fb0"/><circle cx="10.3" cy="10.4" r="4.6" fill="#fff"/><circle cx="10.3" cy="10.4" r="2.6" fill="none" stroke="#0a5fb0" stroke-width="1.8"/></g><path d="M21 0.5l1.2 2.8 2.8 1.2-2.8 1.2-1.2 2.8-1.2-2.8-2.8-1.2 2.8-1.2z" fill="#0a5fb0"/><path d="M23 12.5l.9 1.8 1.8.9-1.8.9-.9 1.8-.9-1.8-1.8-.9 1.8-.9z" fill="#0a5fb0"/></svg>
<!-- link -->
<svg class="a" style="left:910px;top:694px" width="24" height="24" viewBox="0 0 24 24"><g fill="none" stroke="#0a5fb0" stroke-width="2.9" stroke-linecap="round"><path d="M10 7.5l2.8-2.8a4.2 4.2 0 0 1 6 6L16 13.5"/><path d="M14 16.5l-2.8 2.8a4.2 4.2 0 0 1-6-6L8 10.5"/><path d="M9.2 14.8l5.6-5.6"/></g></svg>
<!-- R(x) -->
<div class="a" style="left:949px;top:696px;font-family:'Liberation Serif',serif;font-size:25px;line-height:25px;color:#0a5fb0;letter-spacing:-1px">R</div>
<div class="a" style="left:964px;top:704px;font-size:13px;line-height:13px;color:#0a5fb0">(x)</div>
<!-- kebab -->
<svg class="a" style="left:1000px;top:697px" width="8" height="21" viewBox="0 0 8 21"><g fill="#0a5fb0"><circle cx="4" cy="3.5" r="2.4"/><circle cx="4" cy="10" r="2.4"/><circle cx="4" cy="16.5" r="2.4"/></g></svg>

<!-- blue item toolbar -->
<div class="bt" style="left:775px;width:70px"></div>
<div class="bt" style="left:846px;width:27px"></div>
<div class="bt" style="left:875px;width:27px"></div>
<div class="bt" style="left:903px;width:27px"></div>
<div class="bt" style="left:931px;width:26px"></div>
<svg class="a" style="left:781px;top:747px" width="9" height="14" viewBox="0 0 9 14"><path d="M6.5 2L2 7l4.5 5" fill="none" stroke="#fff" stroke-width="2.4"/></svg>
<div class="a" style="left:797px;top:746px;font-size:16px;line-height:16px;font-weight:bold;color:#fff">item2</div>
<svg class="a" style="left:850px;top:747px" width="19" height="15" viewBox="0 0 19 15"><path d="M1.5 2l5.5 5.5L1.5 13M17.5 2L12 7.5l5.5 5.5" fill="none" stroke="#fff" stroke-width="1.8"/></svg>
<svg class="a" style="left:880px;top:747px" width="17" height="15" viewBox="0 0 17 15"><path d="M6 2L1.5 7.5 6 13M11 2l4.5 5.5L11 13" fill="none" stroke="#fff" stroke-width="1.8"/></svg>
<svg class="a" style="left:908px;top:745px" width="17" height="20" viewBox="0 0 17 20"><path d="M4.5 2.5h7l3.5 3.5v10h-10.5z" fill="#fff"/><path d="M2.5 5v12.5h9.5" fill="none" stroke="#d0f0fc" stroke-width="1.3"/></svg>
<svg class="a" style="left:936px;top:747px" width="15" height="15" viewBox="0 0 15 15"><path d="M2.5 2.5l10 10M12.5 2.5l-10 10" stroke="#fff" stroke-width="3"/></svg>

<!-- bottom Rx badges -->
<div class="rx" style="left:1129px;top:977px;z-index:1"><span>Rx</span><svg class="a" style="left:29px;top:5px" width="18" height="16" viewBox="0 0 18 16"><path d="M2 8.5C4 4.5 7 3 9.5 3s5.5 1.5 7 5.5C15 12.5 12 14 9.5 14S4 12.5 2 8.5z" fill="none" stroke="#1a6bb8" stroke-width="2"/><circle cx="9.5" cy="8.5" r="2.6" fill="none" stroke="#1a6bb8" stroke-width="1.8"/><path d="M4 1.5l3 3" stroke="#1a6bb8" stroke-width="1.8"/></svg></div>
<div class="rx" style="left:1115px;top:963px;z-index:1"><span>Rx</span><svg class="a" style="left:29px;top:5px" width="18" height="16" viewBox="0 0 18 16"><path d="M2 8.5C4 4.5 7 3 9.5 3s5.5 1.5 7 5.5C15 12.5 12 14 9.5 14S4 12.5 2 8.5z" fill="none" stroke="#1a6bb8" stroke-width="2"/><circle cx="9.5" cy="8.5" r="2.6" fill="none" stroke="#1a6bb8" stroke-width="1.8"/><path d="M4 1.5l3 3" stroke="#1a6bb8" stroke-width="1.8"/></svg></div>
<div class="rx" style="left:1274px;top:977px;z-index:1"><span>Rx</span><svg class="a" style="left:29px;top:5px" width="18" height="16" viewBox="0 0 18 16"><path d="M2 8.5C4 4.5 7 3 9.5 3s5.5 1.5 7 5.5C15 12.5 12 14 9.5 14S4 12.5 2 8.5z" fill="none" stroke="#1a6bb8" stroke-width="2"/><circle cx="9.5" cy="8.5" r="2.6" fill="none" stroke="#1a6bb8" stroke-width="1.8"/><path d="M4 1.5l3 3" stroke="#1a6bb8" stroke-width="1.8"/></svg></div>

<!-- TAB BAR -->
<div class="a" style="left:0;top:1034px;width:1920px;height:46px;background:#ecedef;border-top:1.5px solid #dedede"></div>
<svg class="a" style="left:11px;top:1046px" width="17" height="16" viewBox="0 0 17 16"><path d="M2 7.5L8.5 1.5 15 7.5M3.5 6.3v8.2h10V6.3" fill="none" stroke="#8a8a8a" stroke-width="1.5" stroke-linejoin="round"/></svg>
<div class="a" style="left:32px;top:1047px;font-size:15px;line-height:15px;color:#888">Home</div>
<div class="a" style="left:87px;top:1036px;width:180px;height:44px;background:#fff;border-left:1px solid #dcdcdc;border-right:1px solid #dcdcdc"></div>
<div class="a" style="left:88px;top:1075px;width:179px;height:5px;background:#00a3e0"></div>
<svg class="a" style="left:98px;top:1046px" width="16" height="16" viewBox="0 0 16 16"><g fill="none" stroke="#666" stroke-width="1.2"><rect x="5.5" y="1" width="9" height="7"/><path d="M5.5 3.5h9"/><rect x="1" y="9.5" width="6" height="5"/><path d="M3 6v3.5M5.5 8.5H3"/></g></svg>
<div class="a" style="left:119px;top:1048px;font-size:14.6px;line-height:15px;color:#555">Refunds (Global)</div>
<svg class="a" style="left:241px;top:1049px" width="13" height="13" viewBox="0 0 13 13"><path d="M0.8 2.6L2.6 0.8 6.5 4.7 10.4 0.8 12.2 2.6 8.3 6.5 12.2 10.4 10.4 12.2 6.5 8.3 2.6 12.2 0.8 10.4 4.7 6.5z" fill="#555"/></svg>

<!-- RIGHT PANEL -->
<div class="a" style="left:1420px;top:105px;width:500px;height:930px;background:#fff;border-left:1px solid #e2e2e2;border-top:1px solid #dcdcdc"></div>
<div class="a" style="left:1420px;top:106px;width:500px;height:8px;background:linear-gradient(180deg,rgba(0,0,0,.05),rgba(0,0,0,0))"></div>
<div class="a" style="left:1912px;top:105px;width:8px;height:930px;background:linear-gradient(90deg,rgba(0,0,0,0),rgba(0,0,0,.08))"></div>
<svg class="a" style="left:1881px;top:120px" width="12" height="12" viewBox="0 0 12 12"><path d="M2 2l8 8M10 2l-8 8" stroke="#0a5fb0" stroke-width="2.6"/></svg>
<div class="a" style="left:1461px;top:149px;width:22px;height:22px;border:2.6px solid #0a5fb0;border-radius:3px"></div>
<div class="a" style="left:1490px;top:150px;font-size:17.2px;line-height:17px;font-weight:bold;color:#0a5fb0">item2</div>
<div class="a" style="left:1459px;top:194px;width:423px;height:1px;background:#d8d8d8"></div>
<div class="a" style="left:1528px;top:218px;font-size:16px;line-height:16px;font-weight:bold;color:#0a5fb0">Esthetics</div>
<div class="a" style="left:1736px;top:218px;font-size:16px;line-height:16px;font-weight:bold;color:#0a5fb0">Behaviour</div>
<div class="a" style="left:1459px;top:255.5px;width:423px;height:1.5px;background:#cfcfcf"></div>
<div class="a" style="left:1459px;top:254.5px;width:211px;height:3px;background:#00b4ec"></div>
<svg class="a" style="left:1499px;top:267px" width="25" height="25" viewBox="0 0 25 25"><rect x="7" y="7" width="11" height="11" fill="none" stroke="#7eb0d8" stroke-width="1.8"/><g fill="#7eb0d8"><path d="M12.5 1l2.6 2.6H9.9z"/><path d="M12.5 24l2.6-2.6H9.9z"/><path d="M1 12.5l2.6-2.6v5.2z"/><path d="M24 12.5l-2.6-2.6v5.2z"/></g></svg>
<div class="a" style="left:1479px;top:302px;font-size:16px;line-height:16px;color:#8ab6dc">Structure</div>
<div class="a" style="left:1611px;top:258px;width:39px;height:40px;border:3.5px solid #f0900a;border-radius:10px;background:#e2f4fb;box-shadow:0 1px 3px rgba(0,0,0,.25)"></div>
<svg class="a" style="left:1618px;top:266px" width="25" height="25" viewBox="0 0 25 25"><path d="M12.5 2C6.6 2 2 6.5 2 12.3c0 5.3 4.3 10.2 9.4 10.2 1.5 0 2.3-.8 2.3-2 0-1.5-1.3-1.8-1.3-3.4 0-1.3 1-2.3 2.3-2.3h2.8c3.7 0 5.5-2.3 5.5-5C23 5.8 18.5 2 12.5 2z" fill="none" stroke="#0a5fb0" stroke-width="2.2"/><g fill="#0a5fb0"><circle cx="6.5" cy="11.5" r="1.5"/><circle cx="9.3" cy="6.8" r="1.5"/><circle cx="14.5" cy="6" r="1.5"/><circle cx="18.5" cy="9.3" r="1.5"/></g></svg>
<div class="a" style="left:1608px;top:302px;font-size:16px;line-height:16px;font-weight:bold;color:#0a5fb0">Styles</div>
<div class="a" style="left:1459px;top:326px;width:423px;height:1px;background:#d8d8d8"></div>
<div class="a" style="left:1521px;top:341px;width:83px;height:34px;border:1.5px solid #1ab3e8;border-radius:4px"></div>
<div class="a" style="left:1533px;top:351px;font-size:16px;line-height:16px;font-weight:bold;color:#0a5fb0">Regular</div>
<div class="a" style="left:1740px;top:341px;width:75px;height:34px;border:1.5px solid #86d5f2;border-radius:4px"></div>
<div class="a" style="left:1756px;top:351px;font-size:16px;line-height:16px;color:#8ab6dc">Hover</div>

<svg class="a" style="left:1459px;top:412px" width="16" height="12" viewBox="0 0 16 12"><path d="M2 3l6 6 6-6" fill="none" stroke="#0a5fb0" stroke-width="2.4"/></svg>
<div class="sec" style="top:409px">Padding</div>
<svg class="a" style="left:1555px;top:412px" width="25" height="14" viewBox="0 0 25 14"><g fill="none" stroke="#c8c8c8" stroke-width="2.2" stroke-linecap="round"><path d="M9 2.5H6.5a4.5 4.5 0 0 0 0 9H9"/><path d="M16 2.5h2.5a4.5 4.5 0 0 1 0 9H16"/><path d="M8 7h9"/></g></svg>
<div class="plab" style="left:1459px;top:457px">Top</div>
<div class="plab" style="left:1571px;top:457px">Bottom</div>
<div class="plab" style="left:1683px;top:457px">Left</div>
<div class="plab" style="left:1795px;top:457px">Right</div>
<div class="pin" style="left:1459px"><span class="z">0</span><span class="px">px</span></div>
<div class="pin" style="left:1571px"><span class="z">0</span><span class="px">px</span></div>
<div class="pin" style="left:1683px"><span class="z">0</span><span class="px">px</span></div>
<div class="pin" style="left:1795px"><span class="z">0</span><span class="px">px</span></div>

<svg class="chev" style="top:538px" width="10" height="16" viewBox="0 0 10 16"><path d="M2 2l6 6-6 6" fill="none" stroke="#0a5fb0" stroke-width="2.4"/></svg>
<div class="sec" style="top:537px">Background Image</div>
<svg class="chev" style="top:597px" width="10" height="16" viewBox="0 0 10 16"><path d="M2 2l6 6-6 6" fill="none" stroke="#0a5fb0" stroke-width="2.4"/></svg>
<div class="sec" style="top:596px">Background Color</div>
<svg class="chev" style="top:655px" width="10" height="16" viewBox="0 0 10 16"><path d="M2 2l6 6-6 6" fill="none" stroke="#0a5fb0" stroke-width="2.4"/></svg>
<div class="sec" style="top:654px">Edges</div>
<svg class="a" style="left:1539px;top:655px" width="25" height="14" viewBox="0 0 25 14"><g fill="none" stroke="#1a6bb8" stroke-width="2.2" stroke-linecap="round"><path d="M9 2.5H6.5a4.5 4.5 0 0 0 0 9H9"/><path d="M16 2.5h2.5a4.5 4.5 0 0 1 0 9H16"/><path d="M8 7h9"/></g></svg>
<svg class="chev" style="top:715px" width="10" height="16" viewBox="0 0 10 16"><path d="M2 2l6 6-6 6" fill="none" stroke="#0a5fb0" stroke-width="2.4"/></svg>
<div class="sec" style="top:714px">Round Edges</div>
<svg class="a" style="left:1599px;top:715px" width="25" height="14" viewBox="0 0 25 14"><g fill="none" stroke="#1a6bb8" stroke-width="2.2" stroke-linecap="round"><path d="M9 2.5H6.5a4.5 4.5 0 0 0 0 9H9"/><path d="M16 2.5h2.5a4.5 4.5 0 0 1 0 9H16"/><path d="M8 7h9"/></g></svg>
<svg class="chev" style="top:775px" width="10" height="16" viewBox="0 0 10 16"><path d="M2 2l6 6-6 6" fill="none" stroke="#0a5fb0" stroke-width="2.4"/></svg>
<div class="sec" style="top:774px">Shadow</div>
<div class="a" style="left:1917px;top:1067px;width:3px;height:13px;background:#111"></div>
</body></html>
